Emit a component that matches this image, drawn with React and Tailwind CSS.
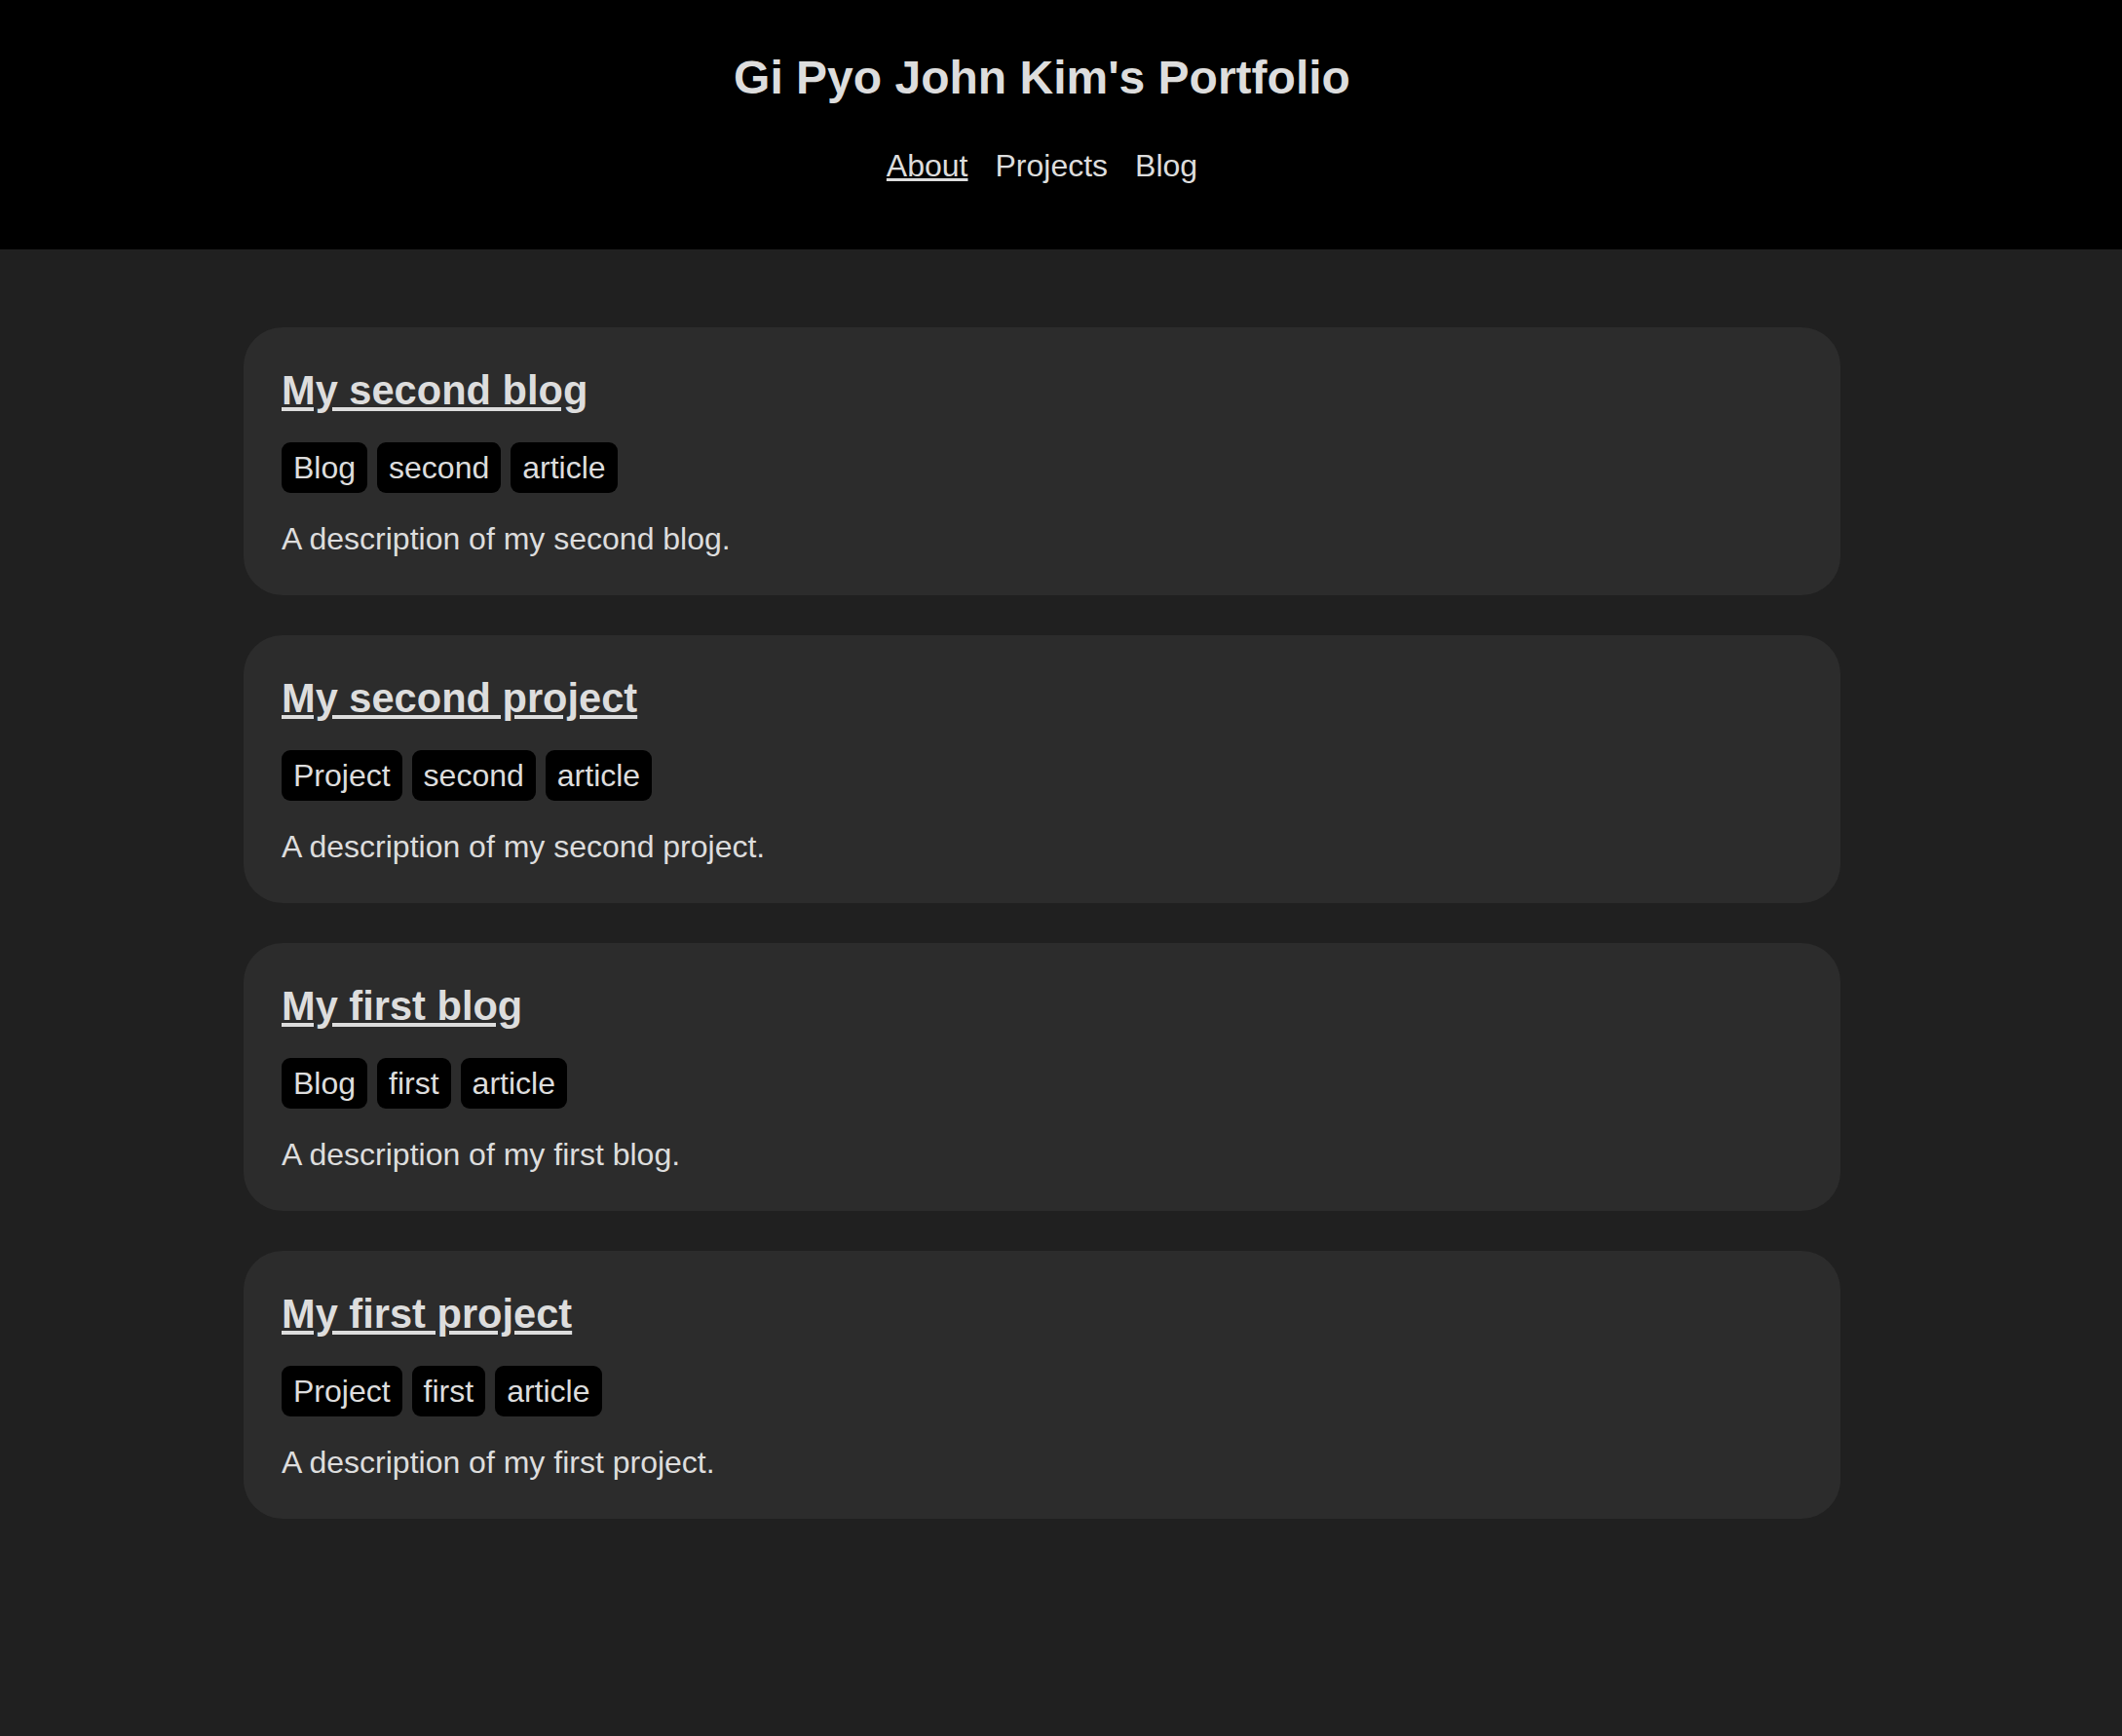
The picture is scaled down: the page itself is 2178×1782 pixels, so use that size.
const posts = [
  { title: "My second blog", tags: ["Blog", "second", "article"], description: "A description of my second blog." },
  { title: "My second project", tags: ["Project", "second", "article"], description: "A description of my second project." },
  { title: "My first blog", tags: ["Blog", "first", "article"], description: "A description of my first blog." },
  { title: "My first project", tags: ["Project", "first", "article"], description: "A description of my first project." },
];

function PostCard({ post }) {
  return (
    <article className="w-[1639px] rounded-[40px] bg-[#2c2c2c] px-[39px] pt-[41px] pb-[39px]">
      <h2 className="text-[41.6px] leading-[48px] font-bold">
        <a href="#" className="underline">{post.title}</a>
      </h2>
      <div className="mt-[29px] flex gap-[10px]">
        {post.tags.map((tag) => (
          <span key={tag} className="rounded-[9px] bg-black px-[12px] py-[7px] text-[32px] leading-[38px]">
            {tag}
          </span>
        ))}
      </div>
      <p className="mt-[29px] text-[32px] leading-[37px]">{post.description}</p>
    </article>
  );
}

export default function App() {
  return (
    <div
      className="min-h-[1782px] bg-[#202020] text-[#dddddd]"
      style={{ fontFamily: '"Liberation Sans", Arial, Helvetica, sans-serif' }}
    >
      <header className="h-[256px] bg-black pr-[39px] pt-[52px]">
        <h1 className="text-center text-[48px] leading-[56px] font-bold">Gi Pyo John Kim's Portfolio</h1>
        <nav className="mt-[44px] flex justify-center gap-[28px] text-[32px] leading-[37px]">
          <a href="#" className="underline">About</a>
          <a href="#">Projects</a>
          <a href="#">Blog</a>
        </nav>
      </header>
      <main className="flex flex-col items-center gap-[41px] pr-[39px] pt-[80px] pb-[80px]">
        {posts.map((post) => (
          <PostCard key={post.title} post={post} />
        ))}
      </main>
    </div>
  );
}
